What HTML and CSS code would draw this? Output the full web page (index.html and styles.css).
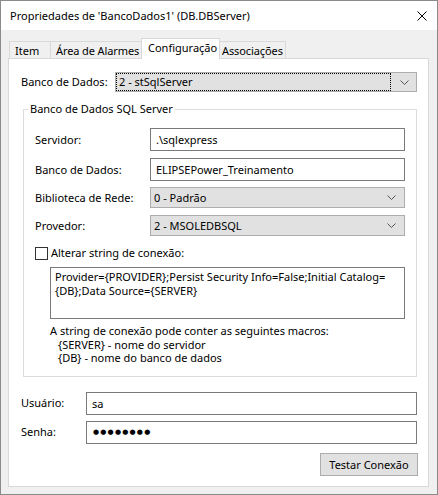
FILE: index.html
```html
<!DOCTYPE html>
<html lang="pt">
<head>
<meta charset="utf-8">
<title>Propriedades de 'BancoDados1'</title>
<link rel="stylesheet" href="styles.css">
</head>
<body>
<div class="window">
  <div class="titlebar">
    <span class="title">Propriedades de 'BancoDados1' (DB.DBServer)</span>
    <svg class="close" width="10" height="10" viewBox="0 0 10 10"><path d="M0.5 0.5L9.5 9.5M9.5 0.5L0.5 9.5" stroke="#000" stroke-width="1" fill="none"/></svg>
  </div>
  <div class="client">
    <div class="tabs">
      <div class="tab tab-item">Item</div>
      <div class="tab tab-area">Área de Alarmes</div>
      <div class="tab tab-conf active">Configuração</div>
      <div class="tab tab-assoc">Associações</div>
    </div>
    <div class="panel">
      <div class="top-row">
        <span class="top-label">Banco de Dados:</span>
        <div class="select select-main">
          <span class="focus-rect">2 - stSqlServer</span>
          <svg class="chev" width="9" height="5" viewBox="0 0 9 5"><path d="M0.5 0.5L4.5 4.5L8.5 0.5" stroke="#555" fill="none"/></svg>
        </div>
      </div>
      <fieldset class="group">
        <legend>Banco de Dados SQL Server</legend>
        <div class="frow frow-input">
          <span class="flabel">Servidor:</span>
          <div class="input">.\sqlexpress</div>
        </div>
        <div class="frow frow-input gap7">
          <span class="flabel">Banco de Dados:</span>
          <div class="input">ELIPSEPower_Treinamento</div>
        </div>
        <div class="frow frow-select gap6">
          <span class="flabel">Biblioteca de Rede:</span>
          <div class="select">
            <span class="sel-text">0 - Padrão</span>
            <svg class="chev" width="9" height="5" viewBox="0 0 9 5"><path d="M0.5 0.5L4.5 4.5L8.5 0.5" stroke="#555" fill="none"/></svg>
          </div>
        </div>
        <div class="frow frow-select gap7">
          <span class="flabel">Provedor:</span>
          <div class="select">
            <span class="sel-text">2 - MSOLEDBSQL</span>
            <svg class="chev" width="9" height="5" viewBox="0 0 9 5"><path d="M0.5 0.5L4.5 4.5L8.5 0.5" stroke="#555" fill="none"/></svg>
          </div>
        </div>
        <div class="check-row">
          <span class="checkbox"></span>
          <span class="check-label">Alterar string de conexão:</span>
        </div>
        <div class="textarea">Provider={PROVIDER};Persist Security Info=False;Initial Catalog=<br>{DB};Data Source={SERVER}</div>
        <div class="help">
          <div>A string de conexão pode conter as seguintes macros:</div>
          <div class="indent">{SERVER} - nome do servidor</div>
          <div class="indent">{DB} - nome do banco de dados</div>
        </div>
      </fieldset>
      <div class="urow first">
        <span class="ulabel">Usuário:</span>
        <div class="input uinput">sa</div>
      </div>
      <div class="urow second">
        <span class="ulabel">Senha:</span>
        <div class="input uinput pass">●●●●●●●●</div>
      </div>
      <div class="btn-row">
        <div class="button">Testar Conexão</div>
      </div>
    </div>
  </div>
</div>
</body>
</html>
```
FILE: styles.css
```css
* { box-sizing: border-box; }
html, body { margin: 0; padding: 0; }
body {
  font-family: "Noto Sans", "Open Sans", sans-serif;
  font-size: 11px;
  color: #000;
  background: #f0f0f0;
}
.window {
  width: 438px;
  height: 495px;
  border: 1px solid #8a8a8a;
  background: #f0f0f0;
  display: flex;
  flex-direction: column;
}
.titlebar {
  height: 29px;
  background: #fff;
  display: flex;
  align-items: center;
  padding-left: 9px;
  padding-right: 10px;
  flex-shrink: 0;
}
.title {
  flex: 1;
  font-size: 11px;
  line-height: 16px;
  color: #000;
}
.close { display: block; }
.client {
  padding: 8px 8px 0 7px;
}
.tabs {
  display: flex;
  align-items: flex-end;
  height: 20px;
  padding-left: 1px;
}
.tab {
  height: 17px;
  border: 1px solid #d9d9d9;
  border-bottom: none;
  margin-right: -1px;
  background: #f0f0f0;
  line-height: 17px;
  padding-left: 5px;
  white-space: nowrap;
  overflow: hidden;
}
.tab-item { width: 42px; }
.tab-area { width: 92px; padding-left: 5px; letter-spacing: -0.1px; }
.tab-conf { width: 79px; }
.tab-assoc { width: 67px; padding-left: 2px; letter-spacing: -0.1px; }
.tab.active {
  height: 21px;
  margin-bottom: -1px;
  background: #fff;
  position: relative;
  z-index: 1;
  line-height: 18px;
  padding-left: 6px;
}
.panel {
  width: 421px;
  height: 429px;
  border: 1px solid #d9d9d9;
  background: #fff;
  padding: 13px 10px 0 12px;
}
.top-row {
  display: flex;
  align-items: center;
  height: 20px;
}
.top-label { width: 94px; line-height: 16px; }
.select {
  height: 21px;
  border: 1px solid #adadad;
  background: #e1e1e1;
  display: flex;
  align-items: center;
  padding-left: 3px;
  padding-right: 8px;
  width: 255px;
}
.select-main {
  width: 302px;
  height: 20px;
  padding-left: 1px;
  padding-right: 7px;
}
.focus-rect {
  flex: 1;
  height: 16px;
  margin-right: 10px;
  margin-top: -1px;
  outline: 1px dotted #000;
  outline-offset: 0;
  line-height: 16px;
  padding-left: 2px;
}
.sel-text { flex: 1; line-height: 16px; }
.chev { display: block; }
.group {
  margin: 9px 0 0 2px;
  width: 394px;
  min-width: 0;
  border: 1px solid #dcdcdc;
  padding: 11px 11px 11px 11px;
}
.group legend {
  padding: 0 2px;
  margin-left: -7px;
  line-height: 16px;
  height: 16px;
}
.frow {
  display: flex;
  align-items: center;
}
.frow.gap7 { margin-top: 7px; }
.frow.gap6 { margin-top: 6px; }
.flabel { width: 115px; line-height: 16px; }
.input {
  height: 23px;
  border: 1px solid #7a7a7a;
  background: #fff;
  padding-left: 5px;
  line-height: 21px;
  width: 255px;
  white-space: nowrap;
}
.check-row {
  display: flex;
  align-items: center;
  height: 16px;
  margin-top: 9px;
}
.checkbox {
  width: 13px;
  height: 13px;
  border: 1px solid #333;
  background: #fff;
  margin-right: 3px;
}
.check-label { line-height: 16px; }
.textarea {
  margin: 6px 0 0 15px;
  width: 355px;
  height: 52px;
  border: 1px solid #7a7a7a;
  padding: 2px 0 0 4px;
  line-height: 14px;
  white-space: nowrap;
}
.help {
  margin: 5px 0 0 15px;
  line-height: 13.5px;
}
.help .indent { padding-left: 8px; }
.urow {
  display: flex;
  align-items: center;
}
.urow.first { margin-top: 15px; }
.urow.second { margin-top: 6px; }
.ulabel { width: 65px; line-height: 16px; }
.uinput { width: 331px; }
.pass {
  font-family: "DejaVu Sans", sans-serif;
  font-size: 7px;
  letter-spacing: 1.2px;
  line-height: 21px;
  padding-left: 6px;
}
.btn-row {
  display: flex;
  justify-content: flex-end;
  margin-top: 9px;
}
.button {
  width: 98px;
  height: 23px;
  border: 1px solid #adadad;
  background: #e1e1e1;
  text-align: center;
  line-height: 21px;
}
```
